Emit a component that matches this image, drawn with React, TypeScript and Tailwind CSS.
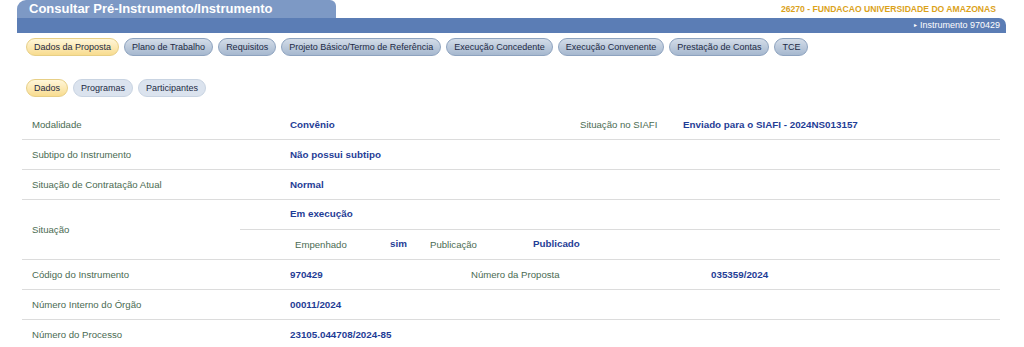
import React from 'react';

const tabs = [
  'Dados da Proposta',
  'Plano de Trabalho',
  'Requisitos',
  'Projeto Básico/Termo de Referência',
  'Execução Concedente',
  'Execução Convenente',
  'Prestação de Contas',
  'TCE',
];

const subTabs = ['Dados', 'Programas', 'Participantes'];

function Tab({ label, active }: { label: string; active: boolean }) {
  return (
    <div
      className={`h-[18px] px-[7px] flex items-center rounded-full border text-[9px] leading-none text-[#1d2a44] ${
        active
          ? 'bg-gradient-to-b from-[#fff6d9] to-[#f8dc8f] border-[#e7cf86]'
          : 'bg-gradient-to-b from-[#d3dce8] to-[#a6b8cf] border-[#8ea3bf]'
      }`}
    >
      {label}
    </div>
  );
}

function SubTab({ label, active }: { label: string; active: boolean }) {
  return (
    <div
      className={`h-[18px] px-[7px] flex items-center rounded-full border text-[9px] leading-none text-[#1d2a44] ${
        active
          ? 'bg-gradient-to-b from-[#fff6d9] to-[#f8dc8f] border-[#e7cf86]'
          : 'bg-[#dbe3ee] border-[#c9d4e2]'
      }`}
    >
      {label}
    </div>
  );
}

const Label = ({ children, className = '' }: { children: React.ReactNode; className?: string }) => (
  <span className={`text-[9.6px] text-[#4a6b52] ${className}`}>{children}</span>
);
const Value = ({ children, className = '' }: { children: React.ReactNode; className?: string }) => (
  <span className={`text-[9.8px] font-bold text-[#1f3d96] ${className}`}>{children}</span>
);

function Row({ children, last }: { children: React.ReactNode; last?: boolean }) {
  return (
    <div className={`h-[30px] flex items-center pt-[1px] ${last ? '' : 'border-b border-[#dcdcdc]'}`}>{children}</div>
  );
}

export default function App() {
  return (
    <div className="w-[1024px] h-[347px] bg-white overflow-hidden font-['Liberation_Sans',Arial,sans-serif]">
      {/* header */}
      <div className="pl-[17px] pr-[18px]">
        <div className="flex items-end justify-between h-[18px]">
          <div className="w-[319px] h-[18px] rounded-tl-[9px] rounded-tr-[6px] bg-[#7d99c5] text-white font-bold text-[13px] leading-[18px] pl-[12px]">
            Consultar Pré-Instrumento/Instrumento
          </div>
          <div className="self-center pr-[10px] text-[8.6px] font-bold text-[#dba21a]">
            26270 - FUNDACAO UNIVERSIDADE DO AMAZONAS
          </div>
        </div>
        <div className="h-[15px] bg-[#5b7db5] rounded-tr-[7px] flex items-center justify-end pr-[6px] text-white text-[9px]">
          <span className="text-[6px] mr-[3px]">▸</span>Instrumento 970429
        </div>
      </div>

      {/* tabs */}
      <div className="flex gap-[5px] pl-[26px] mt-[5px]">
        {tabs.map((t, i) => (
          <Tab key={t} label={t} active={i === 0} />
        ))}
      </div>

      <div className="flex gap-[5px] pl-[26px] mt-[23px]">
        {subTabs.map((t, i) => (
          <SubTab key={t} label={t} active={i === 0} />
        ))}
      </div>

      {/* data table */}
      <div className="ml-[22px] w-[978px] mt-[13px]">
        <Row>
          <Label className="w-[268px] pl-[10px]">Modalidade</Label>
          <Value className="w-[290px]">Convênio</Value>
          <Label className="w-[103px]">Situação no SIAFI</Label>
          <Value>Enviado para o SIAFI - 2024NS013157</Value>
        </Row>
        <Row>
          <Label className="w-[268px] pl-[10px]">Subtipo do Instrumento</Label>
          <Value>Não possui subtipo</Value>
        </Row>
        <Row>
          <Label className="w-[268px] pl-[10px]">Situação de Contratação Atual</Label>
          <Value>Normal</Value>
        </Row>
        <div className="h-[60px] flex border-b border-[#dcdcdc]">
          <div className="w-[218px] flex items-center pt-[1px]">
            <Label className="pl-[10px]">Situação</Label>
          </div>
          <div className="flex-1 flex flex-col">
            <div className="h-[30px] flex items-center pt-[1px] border-b border-[#dcdcdc] pl-[50px]">
              <Value>Em execução</Value>
            </div>
            <div className="h-[30px] flex items-center pt-[1px] pl-[55px]">
              <Label className="w-[95px]">Empenhado</Label>
              <Value className="w-[40px]">sim</Value>
              <Label className="w-[103px]">Publicação</Label>
              <Value>Publicado</Value>
            </div>
          </div>
        </div>
        <Row>
          <Label className="w-[268px] pl-[10px]">Código do Instrumento</Label>
          <Value className="w-[181px]">970429</Value>
          <Label className="w-[240px]">Número da Proposta</Label>
          <Value>035359/2024</Value>
        </Row>
        <Row>
          <Label className="w-[268px] pl-[10px]">Número Interno do Órgão</Label>
          <Value>00011/2024</Value>
        </Row>
        <Row last>
          <Label className="w-[268px] pl-[10px]">Número do Processo</Label>
          <Value>23105.044708/2024-85</Value>
        </Row>
      </div>
    </div>
  );
}
